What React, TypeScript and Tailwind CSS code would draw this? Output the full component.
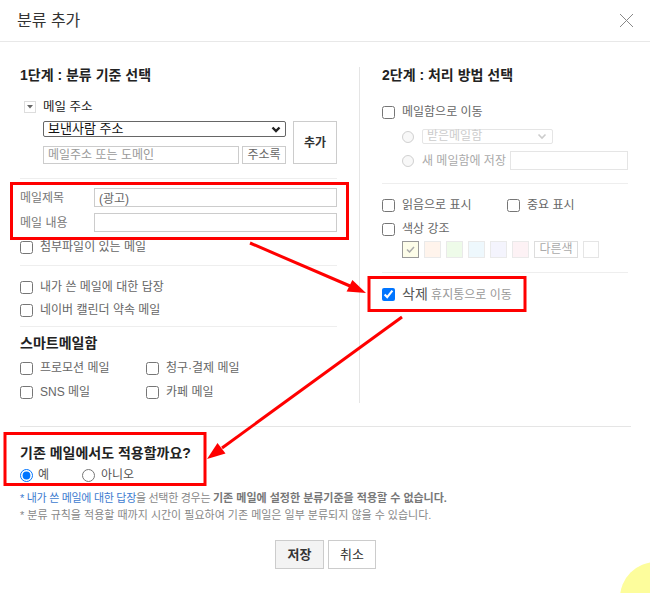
import React from "react";

const swatches = [
  "bg-[#fdfde9]",
  "bg-[#fff4ec]",
  "bg-[#eefbe9]",
  "bg-[#eef8fd]",
  "bg-[#f4f4fd]",
  "bg-[#fdf2f5]",
];

function Check({ label, checked }: { label: React.ReactNode; checked?: boolean }) {
  return (
    <label className="flex items-center h-[16px] gap-[7px] text-[#666] leading-[16px] whitespace-nowrap">
      <input type="checkbox" defaultChecked={checked} className="m-0 w-[13px] h-[13px] shrink-0" />
      {label}
    </label>
  );
}

function Chevron({ color, w = 2.4 }: { color: string; w?: number }) {
  return (
    <svg width="10" height="7" viewBox="0 0 10 7" className="shrink-0">
      <polyline points="1.5,1.5 5,5 8.5,1.5" fill="none" stroke={color} strokeWidth={w} />
    </svg>
  );
}

export default function App() {
  return (
    <div className="relative w-[650px] h-[593px] overflow-hidden bg-white text-[12px] text-[#333] font-['Liberation_Sans','Noto_Sans_CJK_KR',sans-serif]">
      {/* header */}
      <header className="h-[42px] border-b border-[#e8e8e8] flex items-center justify-between pl-[17px] pr-[16px]">
        <h1 className="text-[16px] text-[#333] leading-[20px]">분류 추가</h1>
        <svg width="15" height="15" viewBox="0 0 15 15">
          <path d="M1 1 L14 14 M14 1 L1 14" stroke="#888" strokeWidth="1" />
        </svg>
      </header>

      {/* step columns */}
      <div className="flex pl-[20px] pt-[25px]">
        {/* step 1 */}
        <div className="w-[317px] pb-[3px] flex flex-col">
          <h2 className="h-[16px] leading-[16px] text-[14px] font-bold text-[#222]">1단계 : 분류 기준 선택</h2>

          <div className="mt-[16px] h-[16px] flex items-center">
            <span className="ml-[4px] w-[12px] h-[12px] border border-[#ddd] flex items-center justify-center">
              <svg width="6" height="4" viewBox="0 0 6 4">
                <polygon points="0,0 6,0 3,3.5" fill="#666" />
              </svg>
            </span>
            <span className="ml-[7px] text-[#222] text-[12.5px] leading-[16px]">메일 주소</span>
          </div>

          <div className="mt-[6px] flex ml-[23px]">
            <div className="w-[243px] flex flex-col gap-[9px]">
              <div className="h-[16px] border border-[#666] rounded-[2px] flex items-center justify-between pl-[4px] pr-[4px]">
                <span className="text-[13px] text-[#111] leading-[14px]">보낸사람 주소</span>
                <Chevron color="#222" />
              </div>
              <div className="flex h-[18px] gap-[3px]">
                <input
                  readOnly
                  placeholder="메일주소 또는 도메인"
                  className="w-[196px] h-[18px] border border-[#ccc] px-[4px] text-[12px] placeholder:text-[#999] outline-none"
                />
                <button className="w-[44px] h-[18px] border border-[#ccc] text-[#666] text-[12px] leading-[16px]">주소록</button>
              </div>
            </div>
            <button className="ml-[7px] w-[44px] h-[43px] border border-[#ccc] font-bold text-[12px] text-[#333]">추가</button>
          </div>

          <div className="mt-[14px] h-px bg-[#eee]" />

          <div className="mt-[9px] flex flex-col gap-[6px]">
            <div className="flex items-center h-[19px]">
              <span className="w-[74px] text-[#777]">메일제목</span>
              <input
                readOnly
                defaultValue="(광고)"
                className="w-[243px] h-[19px] border border-[#ccc] px-[4px] text-[12px] text-[#666] outline-none"
              />
            </div>
            <div className="flex items-center h-[19px]">
              <span className="w-[74px] text-[#777]">메일 내용</span>
              <input readOnly className="w-[243px] h-[19px] border border-[#ccc] px-[4px] outline-none" />
            </div>
          </div>

          <div className="mt-[7px]">
            <Check label="첨부파일이 있는 메일" />
          </div>

          <div className="mt-[10px] h-px bg-[#eee]" />

          <div className="mt-[13px] flex flex-col gap-[7px]">
            <Check label="내가 쓴 메일에 대한 답장" />
            <Check label="네이버 캘린더 약속 메일" />
          </div>

          <div className="mt-[8px] h-px bg-[#eee]" />

          <h3 className="mt-[8px] h-[16px] leading-[16px] text-[14px] font-bold text-[#222]">스마트메일함</h3>

          <div className="mt-[9px] grid grid-cols-[126px_1fr] gap-y-[8px]">
            <Check label="프로모션 메일" />
            <Check label="청구·결제 메일" />
            <Check label="SNS 메일" />
            <Check label="카페 메일" />
          </div>
        </div>

        <div className="ml-[22px] w-px bg-[#e5e5e5]" />

        {/* step 2 */}
        <div className="ml-[22px] w-[246px] flex flex-col">
          <h2 className="h-[16px] leading-[16px] text-[14px] font-bold text-[#222]">2단계 : 처리 방법 선택</h2>

          <div className="mt-[21px]">
            <Check label="메일함으로 이동" />
          </div>

          <div className="mt-[9px] ml-[20px] flex items-center h-[15px] gap-[8px]">
            <input type="radio" name="box" disabled className="m-0 w-[12px] h-[12px]" />
            <div className="w-[131px] h-[15px] border border-[#e5e5e5] rounded-[2px] flex items-center justify-between pl-[4px] pr-[5px]">
              <span className="text-[#ccc] leading-[13px]">받은메일함</span>
              <Chevron color="#ccc" w={1.6} />
            </div>
          </div>

          <div className="mt-[7px] ml-[20px] flex items-center h-[19px]">
            <input type="radio" name="box" disabled className="m-0 w-[12px] h-[12px]" />
            <span className="ml-[8px] text-[#aaa] whitespace-nowrap">새 메일함에 저장</span>
            <input readOnly className="ml-auto w-[118px] h-[19px] border border-[#e5e5e5] outline-none" />
          </div>

          <div className="mt-[13px] h-px bg-[#eee]" />

          <div className="mt-[13px] flex">
            <div className="w-[125px]">
              <Check label="읽음으로 표시" />
            </div>
            <Check label="중요 표시" />
          </div>

          <div className="mt-[8px]">
            <Check label="색상 강조" />
          </div>

          <div className="mt-[4px] ml-[20px] flex gap-[5px] h-[17px]">
            {swatches.map((c, i) => (
              <span
                key={c}
                className={`w-[17px] h-[17px] border ${c} ${i === 0 ? "border-[#999]" : "border-[#eaeaea]"} flex items-center justify-center`}
              >
                {i === 0 && (
                  <svg width="9" height="7" viewBox="0 0 9 7">
                    <polyline points="1,3.5 3.5,6 8,1" fill="none" stroke="#aaa" strokeWidth="1.5" />
                  </svg>
                )}
              </span>
            ))}
            <span className="w-[44px] h-[17px] border border-[#ddd] text-[#aaa] text-[12px] leading-[15px] text-center">다른색</span>
            <span className="w-[16px] h-[17px] border border-[#e5e5e5] bg-white" />
          </div>

          <div className="mt-[14px] h-px bg-[#eee]" />

          <div className="mt-[13px]">
            <Check
              checked
              label={
                <span>
                  <span className="text-[#555] text-[14px]">삭제</span>
                  <span className="text-[#999]"> 휴지통으로 이동</span>
                </span>
              }
            />
          </div>
        </div>
      </div>

      {/* apply to existing */}
      <div className="mt-[23px] ml-[20px] mr-[19px] border-t border-[#e5e5e5] pt-[18px] flex flex-col">
        <h3 className="h-[16px] leading-[16px] text-[14px] font-bold text-[#222]">기존 메일에서도 적용할까요?</h3>
        <div className="mt-[6px] flex items-center h-[16px] text-[#555]">
          <label className="flex items-center gap-[5px] w-[62px]">
            <input type="radio" name="apply" defaultChecked className="m-0 w-[13px] h-[13px]" />
            예
          </label>
          <label className="flex items-center gap-[6px]">
            <input type="radio" name="apply" className="m-0 w-[13px] h-[13px]" />
            아니오
          </label>
        </div>

        <div className="mt-[7px] text-[11px] leading-[17px] text-[#888]">
          <p className="whitespace-nowrap tracking-[-0.3px]">
            <span className="text-[#3d7bd0]">* 내가 쓴 메일에 대한 답장</span>을 선택한 경우는{" "}
            <b className="text-[#777] tracking-[0px]">기존 메일에 설정한 분류기준을 적용할 수 없습니다.</b>
          </p>
          <p className="whitespace-nowrap">* 분류 규칙을 적용할 때까지 시간이 필요하여 기존 메일은 일부 분류되지 않을 수 있습니다.</p>
        </div>

        <div className="mt-[16px] flex justify-center gap-[4px]">
          <button className="w-[49px] h-[29px] border border-[#ccc] bg-[#f3f3f3] font-bold text-[13px] text-[#333]">저장</button>
          <button className="w-[48px] h-[29px] border border-[#ccc] bg-white text-[13px] text-[#333]">취소</button>
        </div>
      </div>

      {/* annotations */}
      <svg className="absolute inset-0 pointer-events-none" width="650" height="593" viewBox="0 0 650 593">
        <g fill="none" stroke="#ff0000" strokeWidth="3">
          <rect x="11.5" y="183.5" width="336" height="55" />
          <rect x="369" y="277.5" width="156" height="33" />
          <rect x="5" y="433.5" width="200" height="51" />
          <line x1="250" y1="243" x2="350" y2="286" />
          <line x1="402" y1="317" x2="222" y2="448" />
        </g>
        <g fill="#ff0000">
          <polygon points="366,293 346.6,291.6 352.4,279.9" />
          <polygon points="207,459 217.5,443 225.5,453.5" />
        </g>
      </svg>

      <div className="absolute left-[620px] top-[562px] w-[72px] h-[72px] rounded-full bg-[#fdfd9c]" />
    </div>
  );
}
